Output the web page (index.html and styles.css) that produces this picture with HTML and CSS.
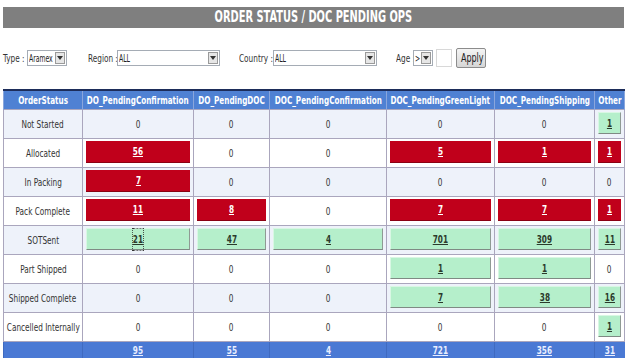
FILE: index.html
```html
<!DOCTYPE html>
<html>
<head>
<meta charset="utf-8">
<link rel="stylesheet" href="styles.css">
</head>
<body>
<div class="page">
  <div class="title"><span class="t">ORDER STATUS / DOC PENDING OPS</span></div>
  <div class="filters">
    <div class="lbl l-type"><span class="t">Type :</span></div>
    <div class="sel w-type"><span class="val"><span class="t">Aramex</span></span><span class="arr"></span></div>
    <div class="lbl l-region"><span class="t">Region :</span></div>
    <div class="sel w-region"><span class="val"><span class="t">ALL</span></span><span class="arr"></span></div>
    <div class="lbl l-country"><span class="t">Country :</span></div>
    <div class="sel w-country"><span class="val"><span class="t">ALL</span></span><span class="arr"></span></div>
    <div class="lbl l-age"><span class="t">Age :</span></div>
    <div class="sel w-age"><span class="val"><span class="t">&gt;</span></span><span class="arr"></span></div>
    <div class="txt"></div>
    <div class="btn"><span class="t">Apply</span></div>
  </div>
  <table class="grid">
    <colgroup>
      <col class="c1"><col class="c2"><col class="c3"><col class="c4"><col class="c5"><col class="c6"><col class="c7">
    </colgroup>
    <thead>
      <tr>
        <th><div class="cc"><span class="t">OrderStatus</span></div></th>
        <th><div class="cc"><span class="t">DO_PendingConfirmation</span></div></th>
        <th><div class="cc"><span class="t">DO_PendingDOC</span></div></th>
        <th><div class="cc"><span class="t">DOC_PendingConfirmation</span></div></th>
        <th><div class="cc"><span class="t">DOC_PendingGreenLight</span></div></th>
        <th><div class="cc"><span class="t">DOC_PendingShipping</span></div></th>
        <th><div class="cc"><span class="t">Other</span></div></th>
      </tr>
    </thead>
    <tbody>
      <tr class="alt"><td><div class="cc"><span class="t">Not Started</span></div></td><td><span class="t">0</span></td><td><span class="t">0</span></td><td><span class="t">0</span></td><td><span class="t">0</span></td><td><span class="t">0</span></td><td><a class="box g"><span class="t">1</span></a></td></tr>
      <tr><td><div class="cc"><span class="t">Allocated</span></div></td><td><a class="box r"><span class="t">56</span></a></td><td><span class="t">0</span></td><td><span class="t">0</span></td><td><a class="box r"><span class="t">5</span></a></td><td><a class="box r"><span class="t">1</span></a></td><td><a class="box r"><span class="t">1</span></a></td></tr>
      <tr class="alt"><td><div class="cc"><span class="t">In Packing</span></div></td><td><a class="box r"><span class="t">7</span></a></td><td><span class="t">0</span></td><td><span class="t">0</span></td><td><span class="t">0</span></td><td><span class="t">0</span></td><td><span class="t">0</span></td></tr>
      <tr><td><div class="cc"><span class="t">Pack Complete</span></div></td><td><a class="box r"><span class="t">11</span></a></td><td><a class="box r"><span class="t">8</span></a></td><td><span class="t">0</span></td><td><a class="box r"><span class="t">7</span></a></td><td><a class="box r"><span class="t">7</span></a></td><td><a class="box r"><span class="t">1</span></a></td></tr>
      <tr class="alt"><td><div class="cc"><span class="t">SOTSent</span></div></td><td><a class="box g"><span class="t focus">21</span></a></td><td><a class="box g"><span class="t">47</span></a></td><td><a class="box g"><span class="t">4</span></a></td><td><a class="box g"><span class="t">701</span></a></td><td><a class="box g"><span class="t">309</span></a></td><td><a class="box g"><span class="t">11</span></a></td></tr>
      <tr><td><div class="cc"><span class="t">Part Shipped</span></div></td><td><span class="t">0</span></td><td><span class="t">0</span></td><td><span class="t">0</span></td><td><a class="box g"><span class="t">1</span></a></td><td><a class="box g"><span class="t">1</span></a></td><td><span class="t">0</span></td></tr>
      <tr class="alt"><td><div class="cc"><span class="t">Shipped Complete</span></div></td><td><span class="t">0</span></td><td><span class="t">0</span></td><td><span class="t">0</span></td><td><a class="box g"><span class="t">7</span></a></td><td><a class="box g"><span class="t">38</span></a></td><td><a class="box g"><span class="t">16</span></a></td></tr>
      <tr><td><div class="cc"><span class="t">Cancelled Internally</span></div></td><td><span class="t">0</span></td><td><span class="t">0</span></td><td><span class="t">0</span></td><td><span class="t">0</span></td><td><span class="t">0</span></td><td><a class="box g"><span class="t">1</span></a></td></tr>
    </tbody>
    <tfoot>
      <tr><td></td><td><a><span class="t">95</span></a></td><td><a><span class="t">55</span></a></td><td><a><span class="t">4</span></a></td><td><a><span class="t">721</span></a></td><td><a><span class="t">356</span></a></td><td><a><span class="t">31</span></a></td></tr>
    </tfoot>
  </table>
</div>
</body>
</html>
```
FILE: styles.css
```css
html, body {
  margin: 0;
  padding: 0;
  background: #ffffff;
}
body {
  font-family: "DejaVu Sans Condensed", "DejaVu Sans", sans-serif;
  color: #333333;
}
.page {
  padding: 7px 5px 0 3px;
  width: 621px;
}
.t {
  display: inline-block;
  white-space: nowrap;
  transform: scaleX(0.74);
  text-decoration: inherit;
}
.title {
  height: 21px;
  line-height: 21px;
  background: #7f7f7f;
  color: #ffffff;
  font-weight: bold;
  font-size: 15px;
  text-align: center;
}
.title .t { transform: scaleX(0.73); }
.filters {
  display: flex;
  align-items: center;
  margin-top: 20px;
  height: 20px;
  font-size: 11px;
}
.lbl {
  color: #333;
  white-space: nowrap;
}
.lbl .t, .sel .t { transform-origin: left center; }
.sel .t { transform: scaleX(0.62); }
.l-type { width: 24px; }
.l-region { margin-left: 21px; width: 29px; }
.l-country { margin-left: 19px; width: 34px; }
.l-age { margin-left: 19px; width: 17px; }
.sel {
  display: flex;
  align-items: center;
  height: 16px;
  border: 1px solid #a5acb5;
  background: #fff;
  box-sizing: border-box;
  font-size: 11px;
  color: #222;
  overflow: hidden;
  position: relative;
}
.sel .val { flex: 1; min-width: 0; padding-left: 1px; white-space: nowrap; }
.sel .arr {
  width: 10px;
  height: 12px;
  margin-right: 1px;
  box-sizing: border-box;
  border: 1px solid #9a9a9a;
  background: #e6e6e6;
  position: relative;
  z-index: 1;
  flex: none;
}
.sel .arr::after {
  content: "";
  position: absolute;
  left: 1px;
  top: 3px;
  border-left: 3px solid transparent;
  border-right: 3px solid transparent;
  border-top: 4px solid #333;
}
.w-type { width: 40px; }
.w-region { width: 103px; }
.w-country { width: 104px; }
.w-age { width: 20px; }
.txt {
  width: 16px;
  height: 18px;
  border: 1px solid #d8d8d8;
  box-sizing: border-box;
  margin-left: 3px;
}
.btn {
  margin-left: 4px;
  width: 30px;
  height: 20px;
  box-sizing: border-box;
  border: 1px solid #8c8c8c;
  border-radius: 2px;
  background: linear-gradient(#f4f4f4, #d6d6d6);
  font-size: 12px;
  line-height: 18px;
  text-align: center;
  color: #222;
  white-space: nowrap;
}
.grid {
  margin-top: 21px;
  border-collapse: collapse;
  width: 621px;
  table-layout: fixed;
  font-size: 11px;
}
.c1 { width: 79px; }
.c2 { width: 111px; }
.c3 { width: 76px; }
.c4 { width: 117px; }
.c5 { width: 108px; }
.c6 { width: 100px; }
.c7 { width: 30px; }
.grid th {
  height: 18px;
  padding: 0;
  background: #4f81d3;
  color: #ffffff;
  font-weight: bold;
  font-size: 11px;
  border-top: 2px solid #1d2d5a;
  border-left: 1px solid #8aa6dc;
  border-right: 1px solid #8aa6dc;
}
.grid th .t { transform: scaleX(0.73); }
.cc {
  display: flex;
  justify-content: center;
  align-items: center;
}
.grid tbody td {
  height: 28px;
  padding: 0;
  text-align: center;
  white-space: nowrap;
  border: 1px solid #aaa6bd;
  background: #ffffff;
}
.grid tbody tr.alt td { background: #eef2fa; }
.box {
  display: block;
  margin: 0 3px 3px 3px;
  height: 22px;
  line-height: 21px;
  box-sizing: border-box;
  font-weight: bold;
  text-decoration: underline;
}
.box.r {
  background: #c0001b;
  color: #ffffff;
  border-bottom: 1px solid #8a0012;
}
.box.g {
  background: #b5efcb;
  color: #2b3a2b;
  border: 1px solid #d9f7e4;
  border-right-color: #8f9a94;
  border-bottom-color: #7f8a84;
}
.focus { outline: 1px dotted #333; }
.grid tfoot td {
  height: 16px;
  padding: 0;
  text-align: center;
  background: #4a79d4;
  border-left: 1px solid #3f6ac0;
}
.grid tfoot a {
  color: #e8eeff;
  font-weight: bold;
  text-decoration: underline;
}
```
